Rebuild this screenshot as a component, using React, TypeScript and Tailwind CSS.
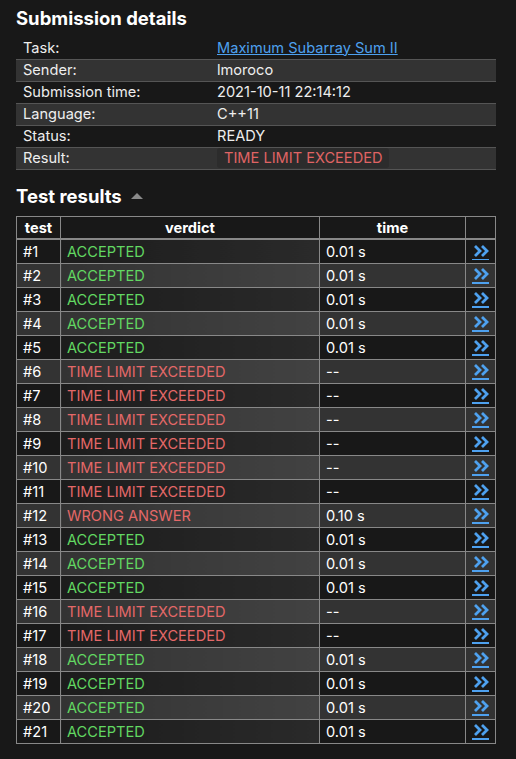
const details: [string, string][] = [
  ["Task:", "Maximum Subarray Sum II"],
  ["Sender:", "lmoroco"],
  ["Submission time:", "2021-10-11 22:14:12"],
  ["Language:", "C++11"],
  ["Status:", "READY"],
  ["Result:", "TIME LIMIT EXCEEDED"],
];

const A = "ACCEPTED";
const T = "TIME LIMIT EXCEEDED";
const W = "WRONG ANSWER";

const tests: [string, string][] = [
  [A, "0.01 s"], [A, "0.01 s"], [A, "0.01 s"], [A, "0.01 s"], [A, "0.01 s"],
  [T, "--"], [T, "--"], [T, "--"], [T, "--"], [T, "--"], [T, "--"],
  [W, "0.10 s"],
  [A, "0.01 s"], [A, "0.01 s"], [A, "0.01 s"],
  [T, "--"], [T, "--"],
  [A, "0.01 s"], [A, "0.01 s"], [A, "0.01 s"], [A, "0.01 s"],
];

function Chevrons() {
  return (
    <svg width="16" height="12" viewBox="0 0 16 12" fill="none" stroke="currentColor" strokeWidth="2.8" strokeLinejoin="miter">
      <polyline points="2,1 7,6 2,11" />
      <polyline points="9,1 14,6 9,11" />
    </svg>
  );
}

export default function App() {
  return (
    <div className="min-h-[759px] bg-[#181818] text-[#eeeeee] px-4 pt-[6px] text-[14.6px]" style={{ fontFamily: "Inter, 'Noto Sans', sans-serif" }}>
      <h2 className="text-[18.5px] font-bold leading-[24px] text-white">Submission details</h2>
      <table className="mt-[7px] w-[480px] border-collapse">
        <tbody>
          {details.map(([k, v], i) => (
            <tr key={k} className={i % 2 ? "bg-[#333333] border-y border-[#555555]" : ""}>
              <td className="h-[22px] w-[201px] pl-[7px] leading-[20px]">{k}</td>
              <td className="h-[22px] leading-[20px]">
                {i === 0 ? (
                  <a href="#" className="text-[#4ea1ef] underline">{v}</a>
                ) : i === 5 ? (
                  <span className="bg-[#2c2c2c] rounded-[3px] px-[7px] py-[1px] text-[#e06464]">{v}</span>
                ) : (
                  v
                )}
              </td>
            </tr>
          ))}
        </tbody>
      </table>

      <h2 className="mt-[14px] flex items-center text-[18.5px] font-bold leading-[24px] text-white">
        Test results
        <span className="ml-[9px] mt-[1px] h-0 w-0 border-x-[6px] border-b-[6px] border-x-transparent border-b-[#8a8a8a]" />
      </h2>
      <table className="mt-[8px] w-[480px] border-collapse border border-[#888888] leading-[18px]">
        <thead>
          <tr className="h-[23px] border-b-2 border-[#888888]">
            <th className="w-[44px] border border-[#888888] pt-[2px] font-bold text-white">test</th>
            <th className="border border-[#888888] pt-[2px] font-bold text-white">verdict</th>
            <th className="w-[146px] border border-[#888888] pt-[2px] font-bold text-white">time</th>
            <th className="w-[30px] border border-[#888888]"></th>
          </tr>
        </thead>
        <tbody>
          {tests.map(([v, t], i) => {
            const even = i % 2 === 1;
            const color = v === A ? "text-[#62d862]" : "text-[#e46868]";
            return (
              <tr key={i} className={`h-[24px] ${even ? "bg-[#333333]" : ""}`}>
                <td className="border border-[#888888] pl-[6px] pt-[2px] text-white">#{i + 1}</td>
                <td
                  className={`border border-[#888888] pl-[6px] pt-[2px] ${color} ${
                    even
                      ? "bg-[linear-gradient(to_right,#333333,#424242)]"
                      : "bg-[linear-gradient(to_right,#1c1c1c,#2a2a2a)]"
                  }`}
                >
                  {v}
                </td>
                <td className="border border-[#888888] pl-[6px] pt-[2px] text-white">{t}</td>
                <td className="border border-[#888888] pt-[2px]">
                  <a href="#" className="flex flex-col items-center text-[#4ea1ef]">
                    <Chevrons />
                    <span className="mt-[2px] h-[1.5px] w-[17px] bg-[#4ea1ef]" />
                  </a>
                </td>
              </tr>
            );
          })}
        </tbody>
      </table>
    </div>
  );
}
